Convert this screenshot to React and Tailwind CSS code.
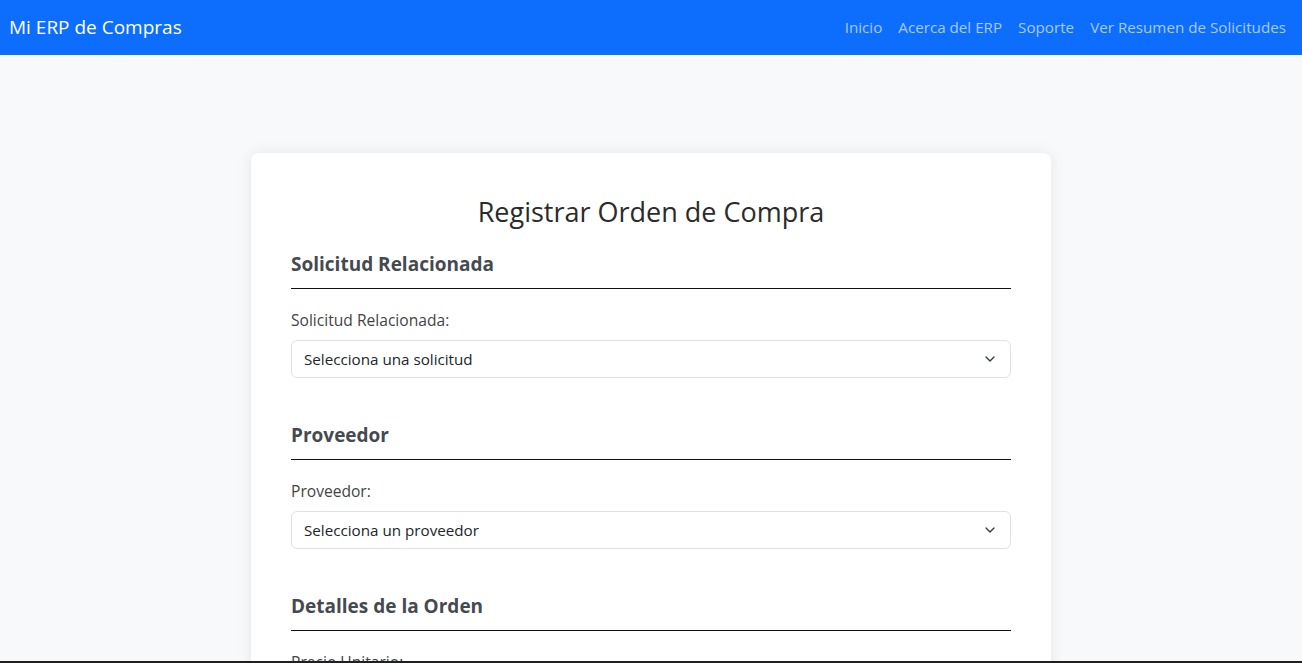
import { ChevronDown } from 'lucide-react';

const font = { fontFamily: '"Open Sans", "Noto Sans", sans-serif' };

function Section({ title, label, placeholder }) {
  return (
    <div className="mb-[45px]">
      <h3 className="text-[19px] leading-[24px] font-bold text-[#454a50] pb-[12px] border-b border-[#111] mb-[19px]">{title}</h3>
      <label className="block text-[15.6px] leading-[24px] text-[#444] mb-2">{label}</label>
      {placeholder && (
        <div className="h-[38px] border border-[#dee2e6] rounded-md px-3 flex items-center justify-between text-[15.2px] text-[#212529] bg-white">
          <span>{placeholder}</span>
          <ChevronDown size={16} strokeWidth={2} className="text-[#343a40]" />
        </div>
      )}
    </div>
  );
}

export default function App() {
  return (
    <div className="min-h-screen bg-[#f8f9fa]" style={font}>
      <nav className="h-[55px] bg-[#0d6efd] flex items-center justify-between pl-[9px] pr-4">
        <span className="text-white text-[19px]">Mi ERP de Compras</span>
        <ul className="flex gap-4 text-[15.2px] text-[#a8c9fe]">
          <li>Inicio</li>
          <li>Acerca del ERP</li>
          <li>Soporte</li>
          <li>Ver Resumen de Solicitudes</li>
        </ul>
      </nav>

      <main className="pt-[98px] flex justify-center">
        <div className="w-[800px] bg-white rounded-lg shadow-[0_0_15px_rgba(0,0,0,0.08)] px-10 pt-[42px] pb-10">
          <h2 className="text-center text-[27px] leading-[34px] text-[#2b2b2b] mb-[23px]">Registrar Orden de Compra</h2>
          <Section title="Solicitud Relacionada" label="Solicitud Relacionada:" placeholder="Selecciona una solicitud" />
          <Section title="Proveedor" label="Proveedor:" placeholder="Selecciona un proveedor" />
          <Section title="Detalles de la Orden" label="Precio Unitario:" />
        </div>
      </main>

      <div className="fixed bottom-0 left-0 right-0 h-[2px] bg-[#1f1f1f]" />
    </div>
  );
}
